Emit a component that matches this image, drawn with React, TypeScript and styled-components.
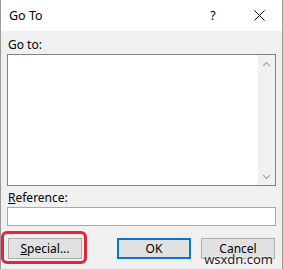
import React from 'react'
import styled, { createGlobalStyle } from 'styled-components'

const Global = createGlobalStyle`
  html, body {
    margin: 0;
    padding: 0;
    background: #f0f0f0;
  }
  * { box-sizing: border-box; }
`

const Window = styled('div')`
  position: relative;
  width: 283px;
  height: 269px;
  display: flex;
  flex-direction: column;
  background: #f0f0f0;
  border-left: 1px solid #9a9a9a;
  border-right: 1px solid #9a9a9a;
  font-family: "Noto Sans", "Open Sans", sans-serif;
  font-size: 12px;
  color: #000;
  overflow: hidden;
`

const TitleBar = styled('div')`
  height: 31px;
  background: #fff;
  display: flex;
  align-items: center;
  padding-left: 8px;
  font-size: 12.5px;
`

const Title = styled('span')`
  flex: 1;
`

const TitleButton = styled('div')`
  width: 46px;
  height: 31px;
  display: flex;
  align-items: center;
  justify-content: center;
`

const Body = styled('div')`
  flex: 1;
  padding: 4px 6px 0 6px;
  display: flex;
  flex-direction: column;
`

const Label = styled('div')`
  height: 19px;
  line-height: 19px;
  padding-left: 1px;
`

const ListBox = styled('div')`
  height: 132px;
  background: #fff;
  border: 1px solid #828282;
  display: flex;
  justify-content: flex-end;
  margin-bottom: 2px;
`

const ScrollBar = styled('div')`
  width: 17px;
  background: #f0f0f0;
  display: flex;
  flex-direction: column;
  justify-content: space-between;
  align-items: center;
  padding: 6px 0 5px;
`

const Input = styled('div')`
  height: 19px;
  background: #fff;
  border: 1px solid #a9a9a9;
`

const ButtonRow = styled('div')`
  display: flex;
  align-items: flex-start;
  margin-top: 5px;
`

const Highlight = styled('div')`
  padding: 4px 2px 2px 4px;
  margin-left: -6px;
  border: 3px solid #e2263a;
  border-radius: 6px;
`

const Button = styled('div')<{ $primary?: boolean }>`
  width: 74px;
  height: 21px;
  display: flex;
  align-items: center;
  justify-content: center;
  background: #e1e1e1;
  border: ${p => (p.$primary ? '2px solid #0078d7' : '1px solid #adadad')};
`

const Spacer = styled('div')<{ $w: number }>`
  width: ${p => p.$w}px;
  flex-shrink: 0;
`

const PlainButton = styled(Button)`
  margin-top: 7px;
`

const Watermark = styled('div')`
  position: absolute;
  right: 9px;
  bottom: 2px;
  font-size: 13px;
  line-height: 15px;
  color: #1e1e1e;
  text-shadow: 0 0 2px #fff, 0 0 2px #fff;
`

const Chevron = ({ up }: { up?: boolean }) => (
  <svg width="9" height="6" viewBox="0 0 9 6">
    <path d={up ? 'M1 5 L4.5 1.5 L8 5' : 'M1 1 L4.5 4.5 L8 1'} fill="none" stroke="#a6a6a6" strokeWidth="1.2" />
  </svg>
)

export default function App() {
  return (
    <Window>
      <Global />
      <TitleBar>
        <Title>Go To</Title>
        <TitleButton>?</TitleButton>
        <TitleButton>
          <svg width="11" height="11" viewBox="0 0 11 11">
            <path d="M0.5 0.5 L10.5 10.5 M10.5 0.5 L0.5 10.5" stroke="#000" strokeWidth="1" />
          </svg>
        </TitleButton>
      </TitleBar>
      <Body>
        <Label>Go to:</Label>
        <ListBox>
          <ScrollBar>
            <Chevron up />
            <Chevron />
          </ScrollBar>
        </ListBox>
        <Label><u>R</u>eference:</Label>
        <Input />
        <ButtonRow>
          <Highlight>
            <Button><span><u>S</u>pecial...</span></Button>
          </Highlight>
          <Spacer $w={30} />
          <PlainButton $primary>OK</PlainButton>
          <Spacer $w={10} />
          <PlainButton>Cancel</PlainButton>
        </ButtonRow>
      </Body>
      <Watermark>wsxdn.com</Watermark>
    </Window>
  )
}
